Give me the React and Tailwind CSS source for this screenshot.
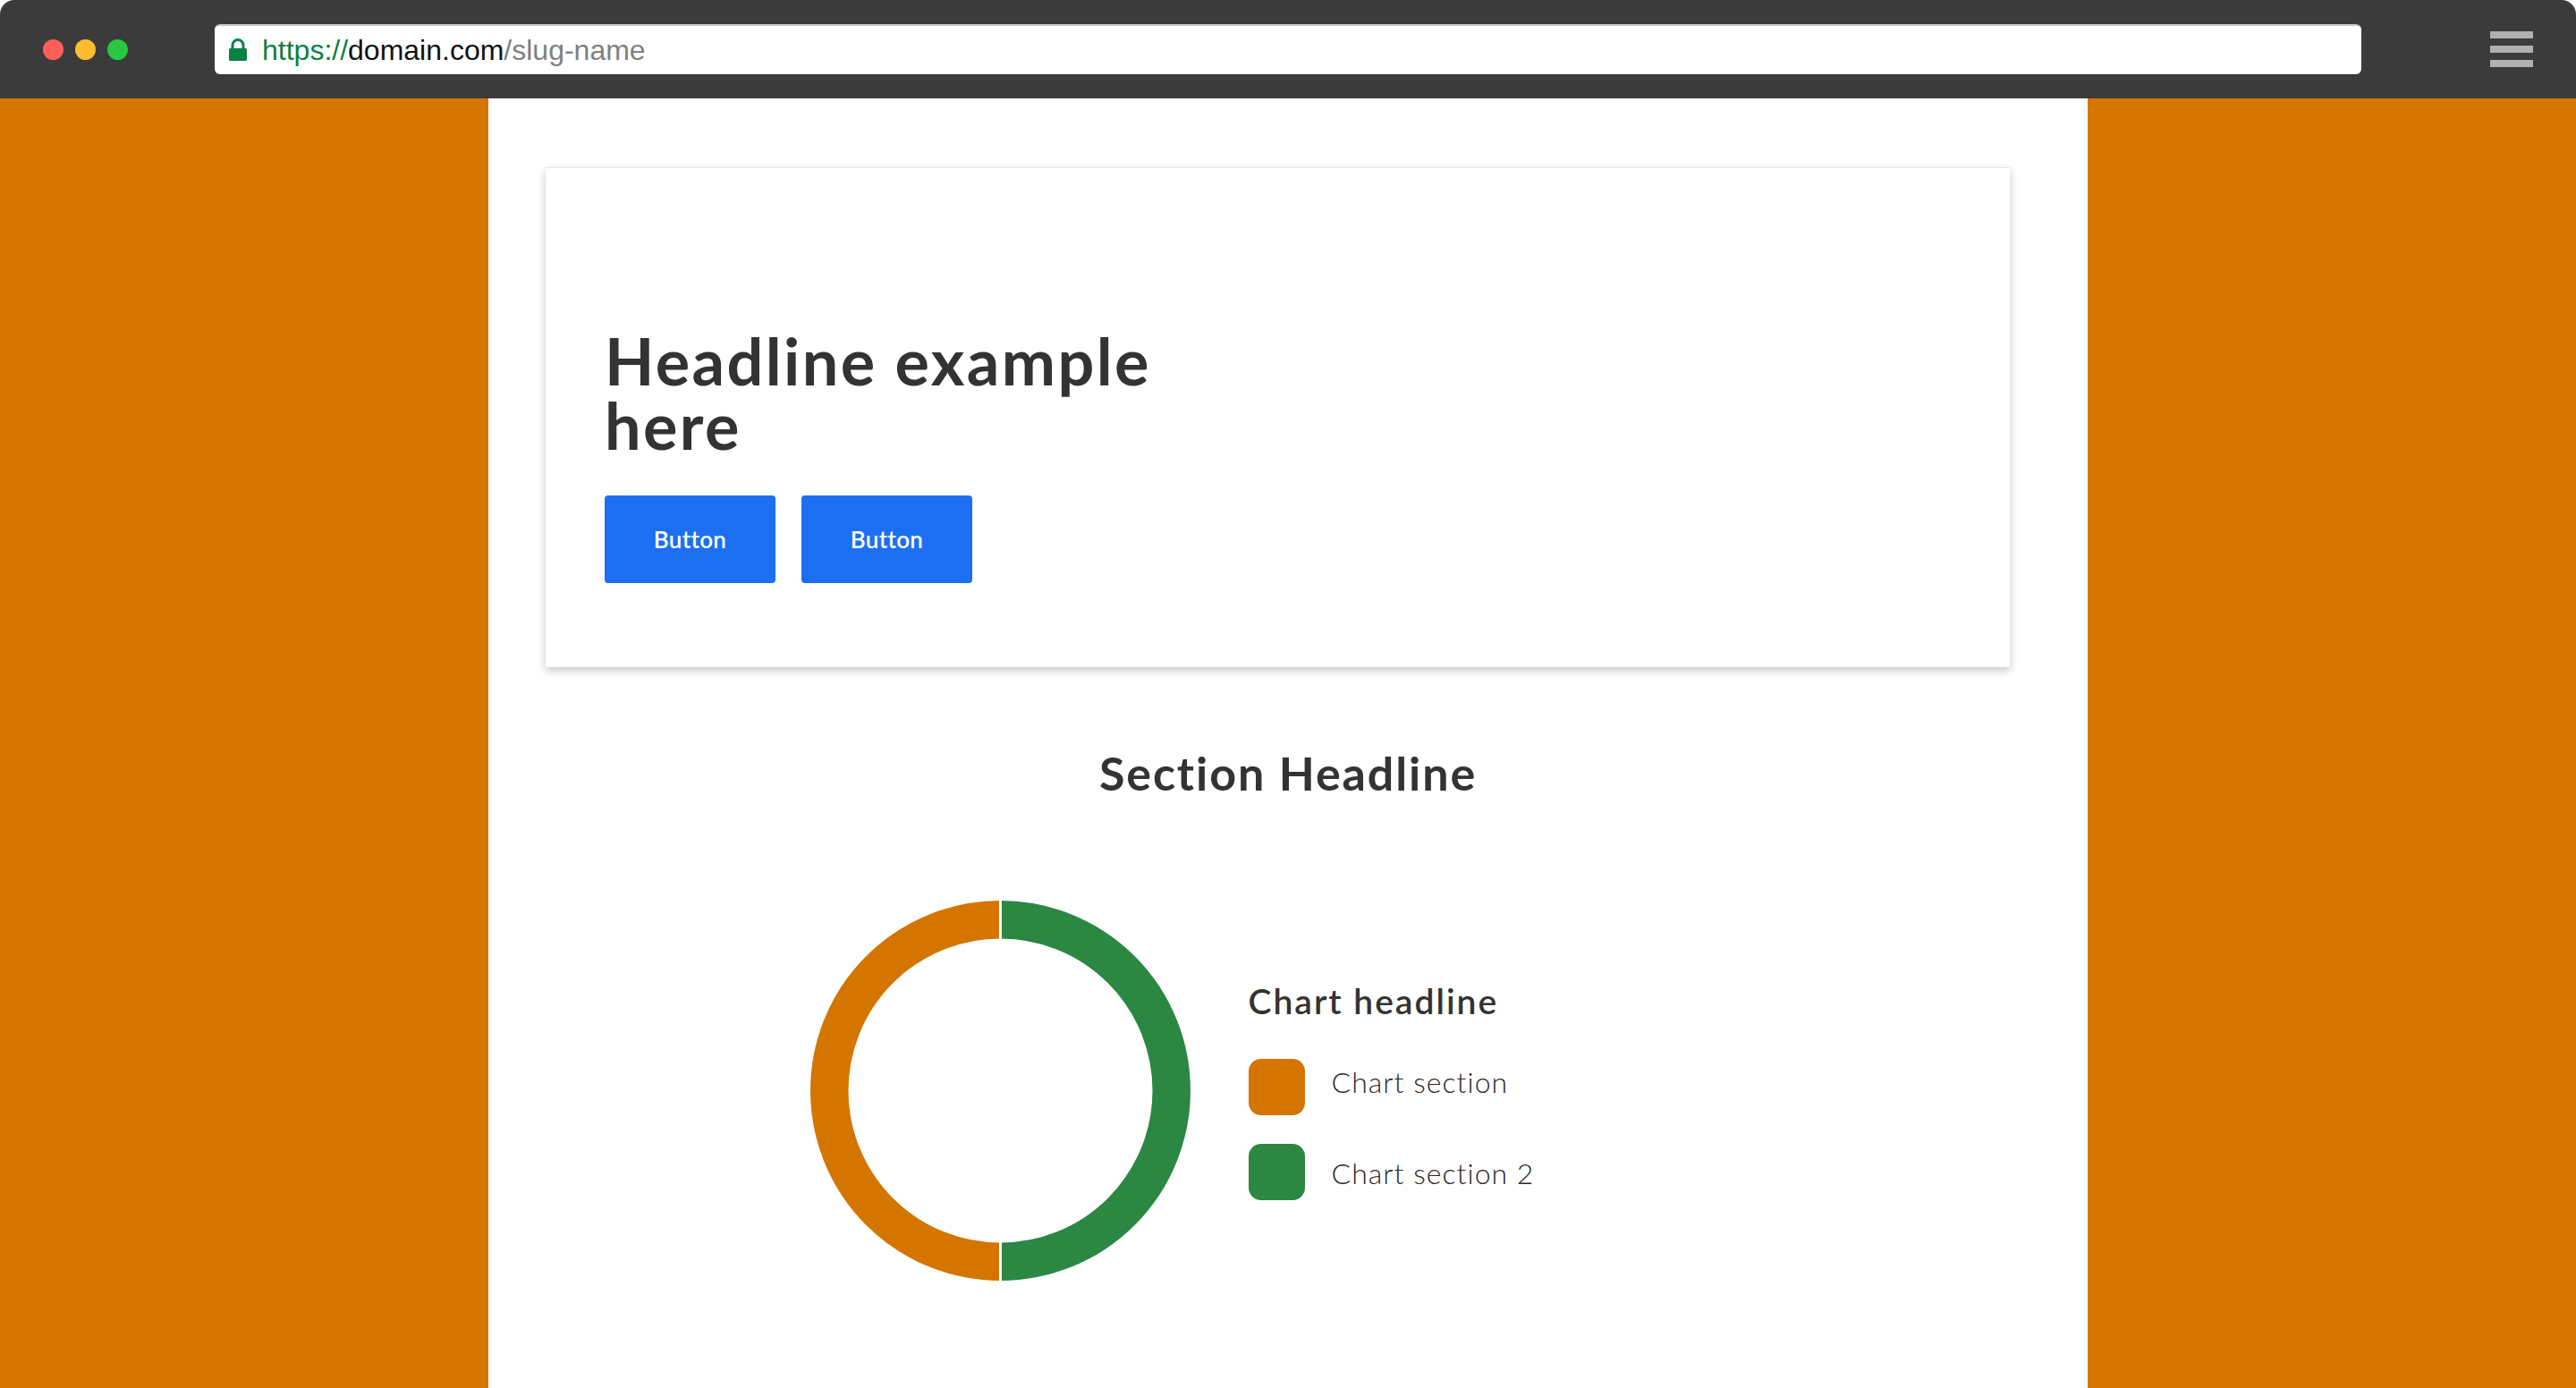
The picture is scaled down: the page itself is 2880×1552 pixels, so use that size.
import React from 'react';

function LockIcon() {
  return (
    <svg width="22" height="26" viewBox="0 0 22 26" className="shrink-0">
      <path d="M5 11V7.5a6 6 0 0 1 12 0V11" fill="none" stroke="#0b8043" strokeWidth="3" />
      <rect x="1" y="11" width="20" height="14" rx="1.5" fill="#0b8043" />
    </svg>
  );
}

function BrowserBar() {
  return (
    <div className="h-[110px] shrink-0 bg-[#3b3b3b] rounded-t-[16px] flex items-center pl-[48px] pr-[48px]">
      <div className="flex items-center gap-[13px]">
        <div className="w-[23px] h-[23px] rounded-full bg-[#ff5f57]" />
        <div className="w-[23px] h-[23px] rounded-full bg-[#ffbd2e]" />
        <div className="w-[23px] h-[23px] rounded-full bg-[#28c940]" />
      </div>
      <div className="ml-[97px] w-[2400px] h-[56px] bg-white rounded-[6px] border-t-2 border-[#c8c8c8] flex items-center pl-[15px] gap-[16px]">
        <LockIcon />
        <div className="font-['Liberation_Sans',Arial,sans-serif] text-[32px] leading-none whitespace-nowrap">
          <span className="text-[#0b8043]">https://</span>
          <span className="text-[#111]">domain.com</span>
          <span className="text-[#808080]">/slug-name</span>
        </div>
      </div>
      <div className="ml-auto flex flex-col gap-[8px]">
        <div className="w-[48px] h-[8px] bg-[#b0b0b0]" />
        <div className="w-[48px] h-[8px] bg-[#b0b0b0]" />
        <div className="w-[48px] h-[8px] bg-[#b0b0b0]" />
      </div>
    </div>
  );
}

function Donut() {
  return (
    <svg width="425" height="425" viewBox="0 0 425 425" className="shrink-0">
      <path d="M212.5 21.25 A191.25 191.25 0 0 0 212.5 403.75" fill="none" stroke="#d47500" strokeWidth="42.5" />
      <path d="M212.5 21.25 A191.25 191.25 0 0 1 212.5 403.75" fill="none" stroke="#2b8742" strokeWidth="42.5" />
      <line x1="212.5" y1="0" x2="212.5" y2="425" stroke="#ffffff" strokeWidth="3" />
    </svg>
  );
}

function LegendItem({ color, label, shift }) {
  return (
    <div className="flex items-center gap-[30px]">
      <div className={`w-[63px] h-[63px] rounded-[14px] ${color}`} />
      <div className={`text-[32px] font-light text-[#2a2a2a] tracking-[1px] leading-none ${shift}`}>{label}</div>
    </div>
  );
}

export default function App() {
  return (
    <div className="w-[2880px] h-[1552px] bg-white flex flex-col overflow-hidden font-['Lato',sans-serif]">
      <BrowserBar />
      <div className="flex-1 bg-[#d47500] flex justify-center">
        <div className="w-[1788px] bg-white flex flex-col pt-[77px]">
          <div className="ml-[64px] w-[1637px] h-[559px] bg-white border-t border-[#e6e6e6] shadow-[0_4px_9px_rgba(0,0,0,0.22)] pt-[179px] pl-[66px]">
            <h1 className="w-[660px] text-[72px] leading-[72px] tracking-[2.4px] font-bold text-[#333]">
              Headline example here
            </h1>
            <div className="flex gap-[29px] mt-[43px]">
              <button className="w-[191px] h-[98px] bg-[#1d6ff2] rounded-[4px] text-white text-[26px] tracking-[0.3px] font-semibold">
                Button
              </button>
              <button className="w-[191px] h-[98px] bg-[#1d6ff2] rounded-[4px] text-white text-[26px] tracking-[0.3px] font-semibold">
                Button
              </button>
            </div>
          </div>
          <h2 className="mt-[88px] text-center text-[52px] leading-[61px] tracking-[1.9px] font-bold text-[#333]">
            Section Headline
          </h2>
          <div className="mt-[112px] flex justify-center items-start">
            <Donut />
            <div className="ml-[65px] w-[579px] pt-[89px] flex flex-col">
              <div className="text-[39px] leading-[47px] tracking-[2px] font-semibold text-[#333]">Chart headline</div>
              <div className="mt-[41px] flex flex-col gap-[32px]">
                <LegendItem color="bg-[#d47500]" label="Chart section" shift="-mt-[12px]" />
                <LegendItem color="bg-[#2b8742]" label="Chart section 2" shift="mt-[3px]" />
              </div>
            </div>
          </div>
        </div>
      </div>
    </div>
  );
}
